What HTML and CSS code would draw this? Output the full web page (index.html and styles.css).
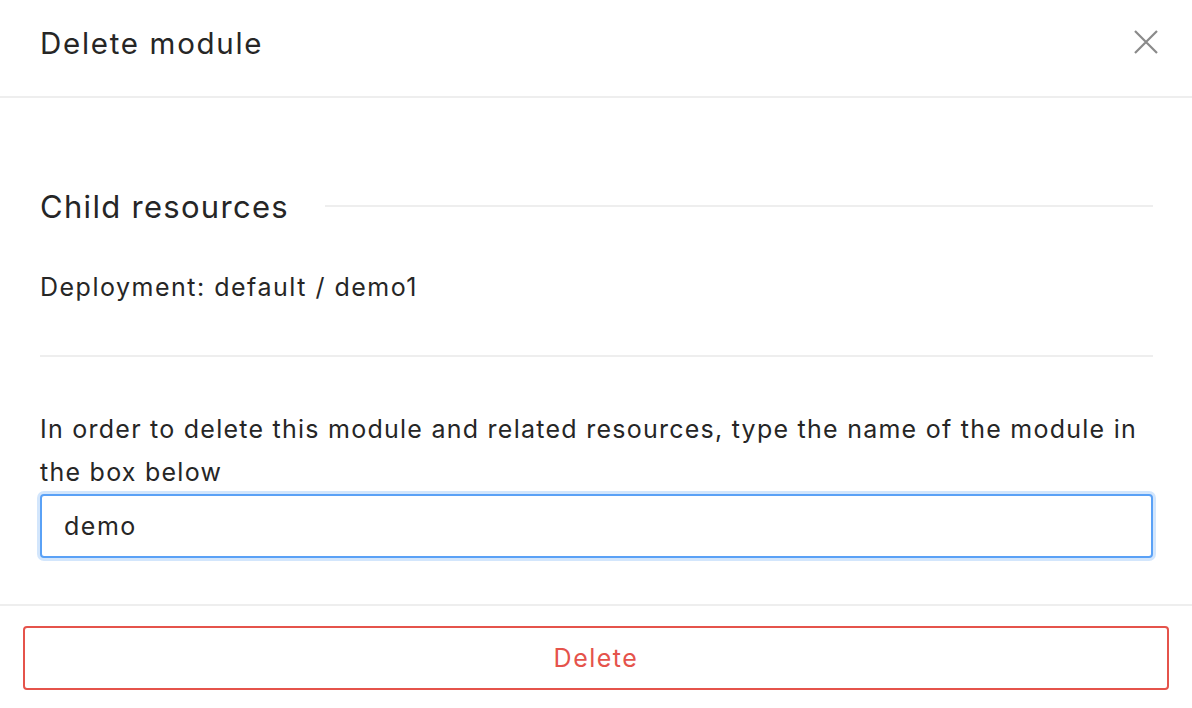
FILE: index.html
```html
<!DOCTYPE html>
<html lang="en">
<head>
<meta charset="utf-8">
<title>Delete module</title>
<link rel="stylesheet" href="styles.css">
</head>
<body>
<div class="modal">
  <header class="modal-header">
    <h1 class="modal-title">Delete module</h1>
    <button class="close-btn" aria-label="Close">
      <svg width="24" height="24" viewBox="0 0 24 24"><path d="M1 1 L23 23 M23 1 L1 23" stroke="#8a8a8a" stroke-width="2.2" fill="none"/></svg>
    </button>
  </header>
  <main class="modal-body">
    <div class="section-title">
      <h2>Child resources</h2>
      <span class="section-line"></span>
    </div>
    <p class="resource">Deployment: default / demo1</p>
    <hr class="divider">
    <p class="instructions">In order to delete this module and related resources, type the name of the module in the box below</p>
    <input class="confirm-input" type="text" value="demo">
  </main>
  <footer class="modal-footer">
    <button class="delete-btn">Delete</button>
  </footer>
</div>
</body>
</html>
```
FILE: styles.css
```css
html, body {
  margin: 0;
  padding: 0;
  background: #fff;
}
body {
  font-family: Inter, "Noto Sans", "Liberation Sans", sans-serif;
  color: #262626;
  width: 1192px;
  height: 708px;
  overflow: hidden;
  letter-spacing: 1.5px;
}
.modal {
  display: flex;
  flex-direction: column;
  height: 708px;
}
.modal-header {
  height: 96px;
  border-bottom: 2px solid #eeeeee;
  display: flex;
  align-items: center;
  justify-content: space-between;
  padding: 0 34px 0 40px;
}
.modal-title {
  margin: 0;
  font-size: 29.5px;
  font-weight: 400;
  letter-spacing: 1.7px;
  color: #262626;
  padding-bottom: 10px;
}
.close-btn {
  border: 0;
  background: none;
  padding: 0;
  width: 24px;
  height: 24px;
  display: flex;
  margin-bottom: 12px;
}
.modal-body {
  padding: 0 39px 0 40px;
  display: flex;
  flex-direction: column;
  flex: 1;
}
.section-title {
  display: flex;
  align-items: center;
  gap: 36px;
  margin-top: 88px;
  height: 40px;
}
.section-title h2 {
  margin: 0;
  font-size: 31px;
  font-weight: 400;
  letter-spacing: 1.3px;
  color: #262626;
}
.section-line {
  flex: 1;
  height: 2px;
  background: #eeeeee;
}
.resource {
  margin: 40px 0 0;
  font-size: 25px;
  line-height: 42px;
}
.divider {
  border: 0;
  height: 2px;
  background: #eeeeee;
  margin: 47px 0 0;
}
.instructions {
  margin: 51px 0 0;
  font-size: 25px;
  line-height: 43px;
  letter-spacing: 1.25px;
}
.confirm-input {
  margin-top: 0;
  box-sizing: border-box;
  height: 64px;
  width: 100%;
  border: 2px solid #5aa1f6;
  border-radius: 4px;
  box-shadow: 0 0 0 3px #d3e6fc;
  padding: 0 22px;
  font-family: inherit;
  font-size: 25px;
  letter-spacing: inherit;
  color: #262626;
  outline: none;
}
.modal-footer {
  border-top: 2px solid #eeeeee;
  padding: 20px 23px 18px;
}
.delete-btn {
  width: 100%;
  height: 64px;
  background: #fff;
  border: 2px solid #e5534b;
  border-radius: 4px;
  color: #e5534b;
  font-family: inherit;
  font-size: 25px;
  letter-spacing: inherit;
}
```
